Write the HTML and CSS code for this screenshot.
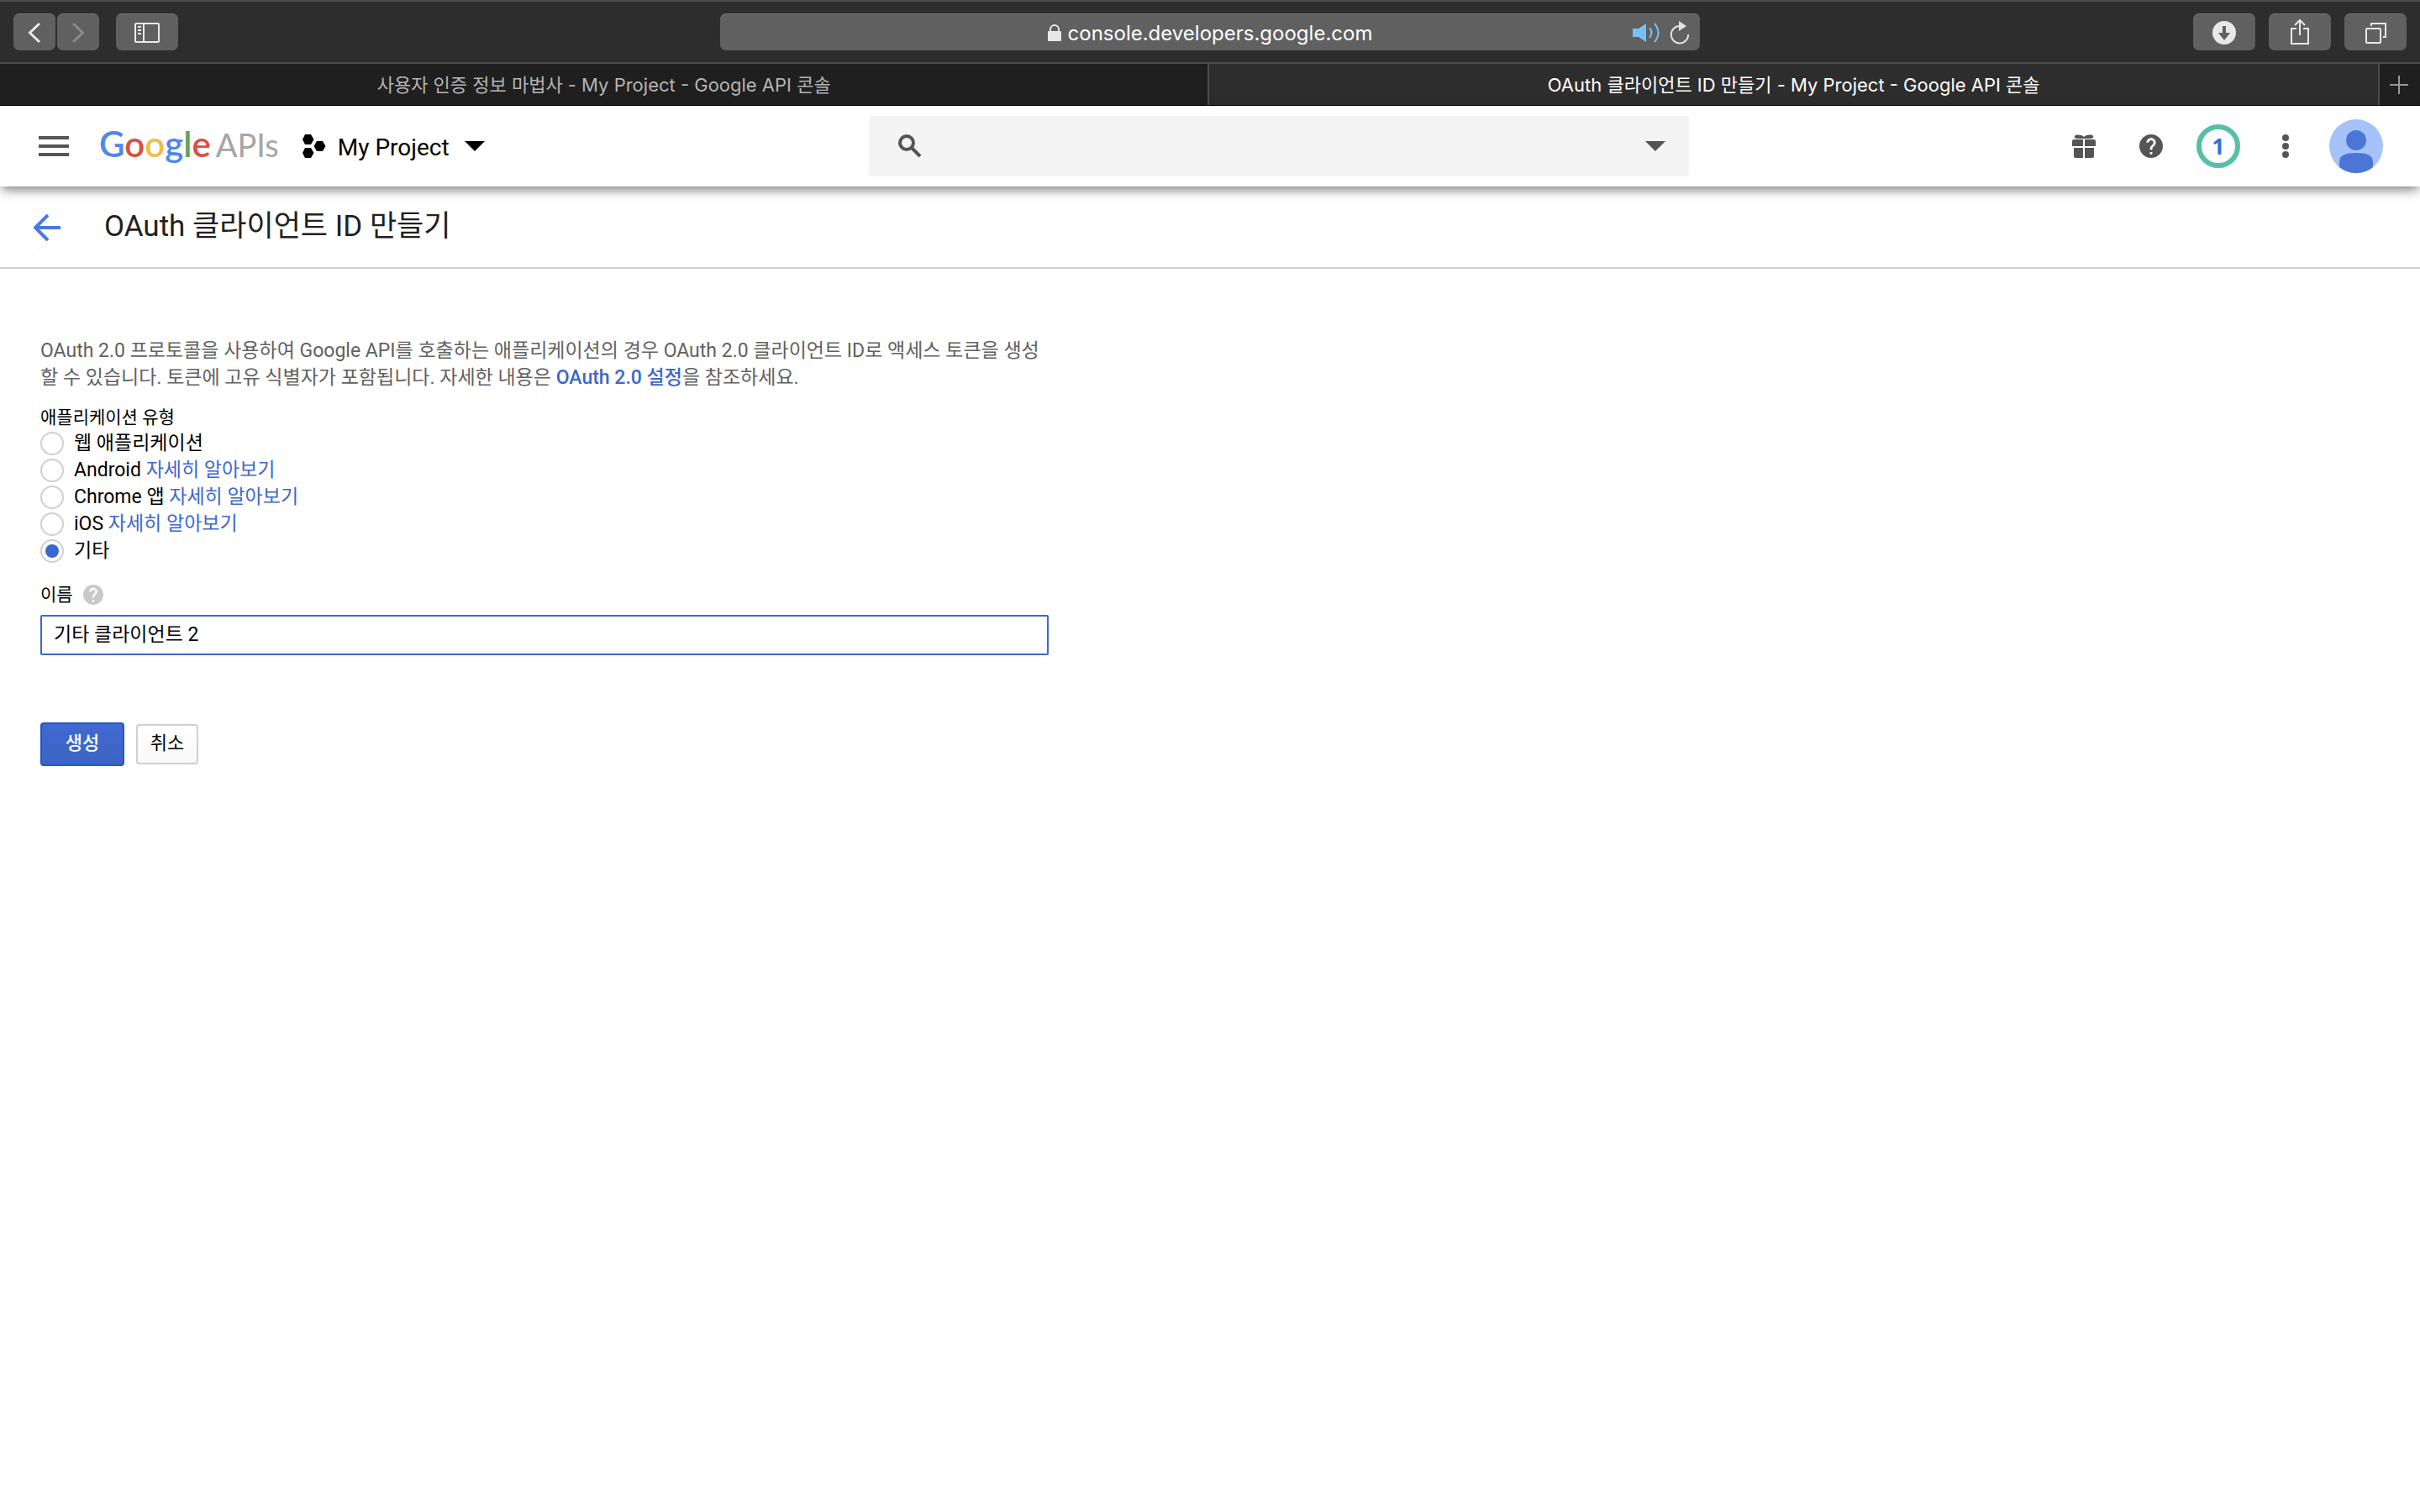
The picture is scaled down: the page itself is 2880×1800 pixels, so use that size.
FILE: index.html
```
<!DOCTYPE html>
<html lang="ko">
<head>
  <meta charset="UTF-8">
  <meta name="viewport" content="width=device-width, initial-scale=1.0">
  <title>OAuth 클라이언트 ID 만들기 - My Project - Google API 콘솔</title>
  <link rel="stylesheet" href="styles.css">
</head>
<body>
<div class="browser">
  <div class="toolbar">
    <div class="toolbar-group">
      <div class="nav-pair">
        <button class="tool-btn nav-btn" aria-label="뒤로"><svg width="50" height="44" viewBox="0 0 50 44"><path d="M31 11L19.500 22L31 33" fill="none" stroke="#e8e8e8" stroke-width="3"/></svg></button>
        <button class="tool-btn nav-btn" aria-label="앞으로"><svg width="50" height="44" viewBox="0 0 50 44"><path d="M19 11L30.500 22L19 33" fill="none" stroke="#8c8c8c" stroke-width="3"/></svg></button>
      </div>
      <button class="tool-btn" aria-label="사이드바">
        <svg width="30" height="24" viewBox="0 0 30 24"><g fill="none" stroke="#e8e8e8" stroke-width="2"><rect x="1" y="1" width="28" height="22" rx="1"/><path d="M11 1v22M4 5h4M4 9h4M4 13h4"/></g></svg>
      </button>
    </div>
    <div class="address">
      <div class="address-site">
        <svg width="16" height="20" viewBox="0 0 16 20"><path d="M3 9V6a5 5 0 0 1 10 0v3" fill="none" stroke="#e8e8e8" stroke-width="2"/><rect y="8" width="16" height="12" rx="1" fill="#e8e8e8"/></svg>
        <input class="address-input" type="text" value="console.developers.google.com" size="26" aria-label="주소">
      </div>
      <div class="address-actions">
        <button class="plain-btn" aria-label="탭 음소거"><svg width="32" height="26" viewBox="0 0 32 26"><path d="M0 8h7L16 2v22L7 18H0z" fill="#78c0f5"/><path d="M20 7q5 6 0 12M26 2q9 11 0 22" fill="none" stroke="#78c0f5" stroke-width="2"/></svg></button>
        <button class="plain-btn" aria-label="새로고침"><svg width="24" height="28" viewBox="0 0 24 28"><path d="M12 6A10.200 10.200 0 1 0 22.200 16" fill="none" stroke="#e0e0e0" stroke-width="2"/><path d="M11 0l9 6-9 6z" fill="#e0e0e0"/></svg></button>
      </div>
    </div>
    <div class="toolbar-group toolbar-right">
      <button class="tool-btn" aria-label="다운로드"><svg width="28" height="28" viewBox="0 0 28 28"><circle cx="14" cy="14" r="14" fill="#e8e8e8"/><path d="M12 6h4v8h5l-7 9-7-9h5z" fill="#606060"/></svg></button>
      <button class="tool-btn share-btn" aria-label="공유"><svg width="24" height="32" viewBox="0 0 24 32"><path d="M8 12H2v18h20V12h-6M12 20V2M6 8l6-6 6 6" fill="none" stroke="#e8e8e8" stroke-width="2"/></svg></button>
      <button class="tool-btn" aria-label="모든 탭 보기"><svg width="26" height="26" viewBox="0 0 26 26"><g fill="none" stroke="#e8e8e8" stroke-width="2"><rect x="2" y="8" width="17" height="17" rx="1"/><path d="M8 5V2h17v16h-3"/></g></svg></button>
    </div>
  </div>
  <div class="tabs">
    <a class="tab" href="#">사용자 인증 정보 마법사 - My Project - Google API 콘솔</a>
    <a class="tab active" href="#">OAuth 클라이언트 ID 만들기 - My Project - Google API 콘솔</a>
    <button class="new-tab" aria-label="새로운 탭"><svg width="22" height="22" viewBox="0 0 22 22"><path d="M11 0v22M0 11h22" stroke="#989898" stroke-width="2"/></svg></button>
  </div>
</div>

<header>
  <div class="header-left">
    <button class="plain-btn" aria-label="메뉴"><svg width="36" height="24" viewBox="0 0 36 24"><path d="M0 2h36M0 12h36M0 22h36" stroke="#555" stroke-width="4"/></svg></button>
    <a class="logo" href="#"><span class="logo-google"><span class="blue">G</span><span class="red">o</span><span class="yellow">o</span><span class="blue">g</span><span class="green">l</span><span class="red">e</span></span><span class="logo-apis">APIs</span></a>
    <button class="project">
      <svg width="28" height="28" viewBox="0 0 28 28"><path d="M3 0h7l3.500 6L10 12H3L0 6zM3 16h7l3.500 6L10 28H3L0 22zM17 8h7l3.500 6L24 20h-7l-3.500-6z"/></svg>
      <span>My Project</span>
      <svg width="24" height="12" viewBox="0 0 24 12"><path d="M0 0h24L12 12z"/></svg>
    </button>
  </div>
  <div class="search">
    <svg width="28" height="28" viewBox="0 0 28 28"><circle cx="10" cy="10" r="8" fill="none" stroke="#555" stroke-width="4"/><path d="M16 16l10 10" stroke="#555" stroke-width="4"/></svg>
    <input type="text" aria-label="검색">
    <button class="plain-btn" aria-label="검색 옵션"><svg width="24" height="12" viewBox="0 0 24 12"><path d="M0 0h24L12 12z" fill="#555"/></svg></button>
  </div>
  <div class="header-right">
    <button class="icon-btn" aria-label="무료 체험판"><svg width="28" height="28" viewBox="0 0 28 28"><path d="M14 3C11 0 4 0 3 2c-1 2 1 3 4 3h14c3 0 5-1 4-3-1-2-8-2-11 1zM2 6h11v8H0V8q0-2 2-2zM15 6h11q2 0 2 2v6H15zM2 16h11v12H4q-2 0-2-2zM15 16h11v10q0 2-2 2h-9z" fill="#555"/></svg></button>
    <button class="icon-btn" aria-label="도움말"><svg width="28" height="28" viewBox="2 2 20 20"><path d="M12 2C6.480 2 2 6.480 2 12s4.480 10 10 10 10-4.480 10-10S17.520 2 12 2zm1 17h-2v-2h2v2zm2.070-7.750l-.9.920C13.450 12.900 13 13.500 13 15h-2v-.5c0-1.100.450-2.100 1.170-2.830l1.240-1.260c.370-.360.590-.860.590-1.410 0-1.100-.9-2-2-2s-2 .9-2 2H8c0-2.210 1.790-4 4-4s4 1.790 4 4c0 .880-.360 1.680-.930 2.250z" fill="#555"/></svg></button>
    <button class="icon-btn" aria-label="알림"><span class="notice">1</span></button>
    <button class="icon-btn" aria-label="더보기"><svg width="8" height="28" viewBox="0 0 8 28"><g fill="#555"><circle cx="4" cy="4" r="4"/><circle cx="4" cy="14" r="4"/><circle cx="4" cy="24" r="4"/></g></svg></button>
    <button class="plain-btn avatar" aria-label="계정"><svg width="64" height="64" viewBox="0 0 64 64"><circle cx="32" cy="32" r="32" fill="#a6c3f9"/><circle cx="32" cy="25" r="12" fill="#4c75d8"/><path d="M12 57v-6q0-8 9-10 11-2 22 0 9 2 9 10v6a32 32 0 0 1-40 0z" fill="#4c75d8"/></svg></button>
  </div>
</header>

<div class="page-title">
  <a class="back" href="#" aria-label="뒤로"><svg width="32" height="32" viewBox="0 0 32 32"><path d="M32 16H3M17 1L2 16l15 15" fill="none" stroke="#467ae0" stroke-width="4"/></svg></a>
  <h1>OAuth 클라이언트 ID 만들기</h1>
</div>

<main>
  <form>
    <p>OAuth 2.0 프로토콜을 사용하여 Google API를 호출하는 애플리케이션의 경우 OAuth 2.0 클라이언트 ID로 액세스 토큰을 생성할 수 있습니다. 토큰에 고유 식별자가 포함됩니다. 자세한 내용은 <a class="strong" href="#">OAuth 2.0 설정</a>을 참조하세요.</p>
    <fieldset>
      <legend>애플리케이션 유형</legend>
      <div class="option"><input type="radio" name="type" id="type-web"><label for="type-web">웹 애플리케이션</label></div>
      <div class="option"><input type="radio" name="type" id="type-android"><label for="type-android">Android <a href="#">자세히 알아보기</a></label></div>
      <div class="option"><input type="radio" name="type" id="type-chrome"><label for="type-chrome">Chrome 앱 <a href="#">자세히 알아보기</a></label></div>
      <div class="option"><input type="radio" name="type" id="type-ios"><label for="type-ios">iOS <a href="#">자세히 알아보기</a></label></div>
      <div class="option"><input type="radio" name="type" id="type-other" checked><label for="type-other">기타</label></div>
    </fieldset>
    <div class="name-label">
      <label for="client-name">이름</label>
      <svg width="24" height="24" viewBox="2 2 20 20"><path d="M12 2C6.480 2 2 6.480 2 12s4.480 10 10 10 10-4.480 10-10S17.520 2 12 2zm1 17h-2v-2h2v2zm2.070-7.750l-.9.920C13.450 12.900 13 13.500 13 15h-2v-.5c0-1.100.450-2.100 1.170-2.830l1.240-1.260c.370-.360.590-.860.590-1.410 0-1.100-.9-2-2-2s-2 .9-2 2H8c0-2.210 1.790-4 4-4s4 1.790 4 4c0 .880-.360 1.680-.930 2.250z" fill="#c9c9c9"/></svg>
    </div>
    <input class="name-input" type="text" id="client-name" value="기타 클라이언트 2">
    <div class="actions">
      <button class="create" type="button">생성</button>
      <button class="cancel" type="button">취소</button>
    </div>
  </form>
</main>
</body>
</html>
```
FILE: styles.css
```
:root {
  --link-color: #3b67d0;
  --text-color: #000;
  --bar-color: #2d2d2d;
  --line-dark: #4d4d4d;
}
* { box-sizing: border-box; }
body { font-family: Roboto, "Noto Sans CJK KR", sans-serif; font-size: 23px; line-height: 32px; margin: 0; background-color: #fff; color: var(--text-color); }
button, input { font: inherit; color: inherit; margin: 0; }
svg { display: block; flex: none; }
a { color: var(--link-color); text-decoration: none; }
.plain-btn { background: none; border: none; padding: 0; cursor: pointer; }

/* browser window */
.browser { font-family: Inter, "Noto Sans CJK KR", sans-serif; background-color: var(--bar-color); border-top: 2px solid var(--line-dark); border-bottom: 1px solid #000; }
.toolbar { display: grid; grid-template-columns: 1fr 1166px 1fr; align-items: center; padding: 14px 16px; }
.toolbar-group { display: flex; gap: 16px; }
.nav-pair { display: flex; gap: 2px; margin-right: 4px; }
.toolbar-right { justify-content: flex-end; }
.tool-btn { display: flex; align-items: center; justify-content: center; width: 74px; height: 44px; padding: 0; border: none; border-top: 1px solid #777; border-radius: 7px; background-color: #606060; cursor: pointer; }
.nav-btn { width: 50px; }
.share-btn { padding-bottom: 2px; }
.address { display: grid; grid-template-columns: 1fr auto 1fr; align-items: center; height: 44px; padding: 0 12px; border-top: 1px solid #777; border-radius: 7px; background-color: #606060; color: #fff; font-size: 24px; }
.address-site { grid-column: 2; display: flex; align-items: center; gap: 8px; }
.address-input { field-sizing: content; background: none; border: none; padding: 2px 0 0; outline: none; }
.address-actions { display: flex; gap: 12px; align-items: center; justify-content: flex-end; }
.tabs { display: flex; border-top: 2px solid var(--line-dark); background-color: #1f1f1f; font-size: 22px; }
.tab { flex: 1438; padding: 9px 20px 8px; text-align: center; color: #b5b5b5; white-space: nowrap; overflow: hidden; border-right: 2px solid var(--line-dark); }
.tab.active { flex-grow: 1390; background-color: var(--bar-color); color: #fff; }
.new-tab { width: 48px; padding: 0 12px; border: none; background: none; cursor: pointer; }

/* console header */
header { position: relative; display: grid; grid-template-columns: 988fr 976fr 826fr; align-items: center; padding: 12px 44px 12px 46px; background-color: #fff; box-shadow: 0 6px 12px -2px rgba(0,0,0,0.5); }
.header-left, .header-right { display: flex; align-items: center; }
.header-right { justify-content: flex-end; }
.logo { display: flex; align-items: baseline; gap: 6px; margin-left: 36px; padding-bottom: 6px; font-family: Lato, sans-serif; line-height: 56px; }
.logo-google { font-size: 42px; font-weight: 600; }
.logo-apis { font-size: 38px; font-weight: 400; color: #a5a5a5; }
.blue { color: #4f87ec; }
.red { color: #db4f40; }
.yellow { color: #f4bd42; }
.green { color: #58a65c; }
.project { display: flex; align-items: center; gap: 14px; margin-left: 28px; padding: 0; border: none; background: none; font-size: 28px; cursor: pointer; }
.project span { margin-right: 4px; padding-top: 4px; }
.search { display: flex; align-items: center; height: 72px; padding: 0 28px 0 35px; border-radius: 4px; background-color: #f4f4f4; }
.search input { flex: 1; min-width: 0; margin-left: 16px; border: none; background: none; outline: none; }
.icon-btn { display: flex; align-items: center; justify-content: center; width: 80px; height: 64px; padding: 0; border: none; background: none; cursor: pointer; }
.notice { width: 52px; height: 52px; border: 6px solid #57bea7; border-radius: 50%; color: #2f6fe0; font-family: "Open Sans", sans-serif; font-size: 26px; font-weight: 700; line-height: 40px; text-align: center; }
.avatar { margin-left: 12px; }

/* page */
.page-title { display: flex; align-items: center; gap: 52px; padding: 23px 40px; border-bottom: 2px solid #d3d3d3; }
.back { padding-top: 2px; }
h1 { margin: 0; font-size: 35px; font-weight: 400; line-height: 50px; color: #212121; }
main { padding: 82px 48px; }
form { max-width: 1200px; }
p { margin: 0 0 16px; color: #616161; }
.strong { font-weight: 500; }
fieldset { margin: 0; padding: 0; border: none; }
legend { padding: 0; font-size: 21px; line-height: 30px; }
.option { display: flex; align-items: center; gap: 12px; }
input[type="radio"] { appearance: none; display: grid; place-items: center; width: 28px; height: 28px; border: 2px solid #d0d0d0; border-radius: 50%; }
input[type="radio"]:checked::before { content: ""; width: 16px; height: 16px; border-radius: 50%; background-color: var(--link-color); }
.name-label { display: flex; align-items: center; gap: 12px; margin: 20px 0 8px; font-size: 21px; }
.name-input { display: block; width: 100%; height: 48px; padding: 0 14px 6px; border: 2px solid var(--link-color); border-radius: 2px; outline: none; }
.actions { display: flex; align-items: center; gap: 14px; margin-top: 80px; font-size: 22px; }
.actions button { border-radius: 4px; padding: 0 0 2px; cursor: pointer; }
.create { width: 100px; height: 52px; border: 2px solid #2456c7; background: linear-gradient(#4069d2, #3d64c4); color: #fff; font-weight: 500; }
.cancel { width: 74px; height: 48px; border: 2px solid #d0d0d0; background: linear-gradient(#fff, #f9f9f9); }
```
